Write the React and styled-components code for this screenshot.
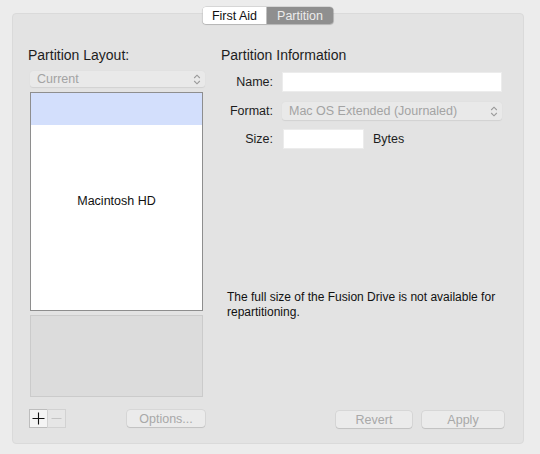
import styled, { createGlobalStyle } from 'styled-components';

const GlobalStyle = createGlobalStyle`
  html, body {
    margin: 0;
    padding: 0;
    background: #ececec;
    font-family: "Liberation Sans", Arial, sans-serif;
    color: #1a1a1a;
  }
`;

const Page = styled.div`
  width: 540px;
  height: 454px;
  padding: 13px 16px 10px 12px;
  box-sizing: border-box;
`;

const Panel = styled.div`
  position: relative;
  height: 100%;
  box-sizing: border-box;
  background: #e3e3e3;
  border: 1px solid #dadada;
  border-radius: 4px;
  padding: 33px 19px 15px 15px;
  display: flex;
  gap: 16px;
`;

const Tabs = styled.div`
  position: absolute;
  top: -7px;
  left: 50%;
  transform: translateX(-50%);
  display: flex;
  height: 17px;
  border-radius: 4px;
  box-shadow: 0 0 0 0.5px rgba(0, 0, 0, 0.18), 0 1px 1px rgba(0, 0, 0, 0.12);
  overflow: hidden;
`;

const Tab = styled.div`
  display: flex;
  align-items: center;
  justify-content: center;
  width: ${({ $w }) => $w}px;
  font-size: 12.5px;
  background: ${({ $active }) => ($active ? '#8f8f8f' : '#ffffff')};
  color: ${({ $active }) => ($active ? '#ececec' : '#111')};
`;

const LeftColumn = styled.div`
  width: 177px;
  flex-shrink: 0;
  display: flex;
  flex-direction: column;
`;

const RightColumn = styled.div`
  flex: 1;
  min-width: 0;
  display: flex;
  flex-direction: column;
`;

const Title = styled.div`
  font-size: 14px;
  line-height: 16px;
  color: #1d1d1d;
`;

const Popup = styled.div`
  display: flex;
  align-items: center;
  justify-content: space-between;
  height: ${({ $h }) => $h}px;
  margin-top: ${({ $mt }) => $mt}px;
  margin-left: ${({ $ml }) => $ml || 0}px;
  padding: 0 4px 0 7px;
  background: #e9e9e9;
  border-radius: 3px;
  box-shadow: 0 0.5px 1px rgba(0, 0, 0, 0.08);
  font-size: 12.5px;
  color: #a3a3a3;
`;

const Chevrons = () => (
  <svg width="8" height="11" viewBox="0 0 8 11" fill="none" stroke="#9a9a9a" strokeWidth="1.1">
    <path d="M1.2 4 L4 1.2 L6.8 4" />
    <path d="M1.2 7 L4 9.8 L6.8 7" />
  </svg>
);

const List = styled.div`
  margin: 5px 2px 0 2px;
  height: 219px;
  box-sizing: border-box;
  background: #ffffff;
  border: 1px solid #8e8e8e;
  display: flex;
  flex-direction: column;
`;

const SelectedSlice = styled.div`
  height: 32px;
  background: #d3dffc;
`;

const VolumeSlice = styled.div`
  flex: 1;
  display: flex;
  align-items: center;
  justify-content: center;
  font-size: 12.5px;
  color: #111;
  padding-bottom: 33px;
`;

const InfoBox = styled.div`
  margin: 4px 2px 0 2px;
  height: 82px;
  box-sizing: border-box;
  background: #dcdcdc;
  border: 1px solid #cbcbcb;
`;

const BottomBar = styled.div`
  margin-top: auto;
  display: flex;
  align-items: center;
  justify-content: space-between;
`;

const PlusMinus = styled.div`
  display: flex;
  margin-left: 1px;
`;

const SquareButton = styled.div`
  width: 19px;
  height: 19px;
  box-sizing: border-box;
  display: flex;
  align-items: center;
  justify-content: center;
  background: ${({ $disabled }) => ($disabled ? '#e6e6e6' : '#f4f4f4')};
  border: 1px solid ${({ $disabled }) => ($disabled ? '#d2d2d2' : '#bdbdbd')};
  margin-left: ${({ $first }) => ($first ? 0 : -1)}px;
`;

const PushButton = styled.div`
  width: ${({ $w }) => $w}px;
  height: 17px;
  display: flex;
  align-items: center;
  justify-content: center;
  background: #ebebeb;
  border-radius: 3px;
  box-shadow: 0 0 0 0.5px rgba(0, 0, 0, 0.1), 0 1px 1px rgba(0, 0, 0, 0.1);
  font-size: 12.5px;
  color: #a8a8a8;
`;

const ButtonGroup = styled.div`
  display: flex;
  gap: 10px;
  margin-left: auto;
`;

const Form = styled.div`
  display: grid;
  grid-template-columns: 52px 1fr;
  column-gap: 9px;
  align-items: center;
  margin: 9px 2px 0 0;
`;

const Label = styled.div`
  text-align: right;
  font-size: 12.5px;
  color: #1d1d1d;
`;

const Field = styled.div`
  height: 20px;
  width: ${({ $w }) => ($w ? `${$w}px` : 'auto')};
  box-sizing: border-box;
  background: #ffffff;
  border: 1px solid #ececec;
`;

const Row = styled.div`
  grid-column: 2;
  display: flex;
  align-items: center;
  gap: 9px;
  padding-left: 1px;
`;

const FormGap = styled.div`
  grid-column: 1 / 3;
  height: ${({ $h }) => $h}px;
`;

const Note = styled.div`
  margin-top: 141px;
  margin-left: 6px;
  font-size: 12px;
  line-height: 14.5px;
  color: #111;
  width: 276px;
`;

export default function App() {
  return (
    <>
      <GlobalStyle />
      <Page>
        <Panel>
          <Tabs>
            <Tab $w={64}>First Aid</Tab>
            <Tab $w={67} $active>Partition</Tab>
          </Tabs>

          <LeftColumn>
            <Title>Partition Layout:</Title>
            <Popup $h={16} $mt={8} $ml={2}>
              Current
              <Chevrons />
            </Popup>
            <List>
              <SelectedSlice />
              <VolumeSlice>Macintosh HD</VolumeSlice>
            </List>
            <InfoBox />
            <BottomBar>
              <PlusMinus>
                <SquareButton $first>
                  <svg width="13" height="13" viewBox="0 0 13 13" stroke="#111" strokeWidth="1.1">
                    <path d="M6.5 0.5 V12.5 M0.5 6.5 H12.5" />
                  </svg>
                </SquareButton>
                <SquareButton $disabled>
                  <svg width="11" height="11" viewBox="0 0 11 11" stroke="#c4c4c4" strokeWidth="1">
                    <path d="M0.5 5.5 H10.5" />
                  </svg>
                </SquareButton>
              </PlusMinus>
              <PushButton $w={78}>Options...</PushButton>
            </BottomBar>
          </LeftColumn>

          <RightColumn>
            <Title>Partition Information</Title>
            <Form>
              <Label>Name:</Label>
              <Field />
              <FormGap $h={10} />
              <Label>Format:</Label>
              <Popup $h={18} $mt={0}>
                Mac OS Extended (Journaled)
                <Chevrons />
              </Popup>
              <FormGap $h={9} />
              <Label>Size:</Label>
              <Row>
                <Field $w={81} />
                <Label>Bytes</Label>
              </Row>
            </Form>
            <Note>The full size of the Fusion Drive is not available for repartitioning.</Note>
            <BottomBar>
              <ButtonGroup>
                <PushButton $w={76}>Revert</PushButton>
                <PushButton $w={82}>Apply</PushButton>
              </ButtonGroup>
            </BottomBar>
          </RightColumn>
        </Panel>
      </Page>
    </>
  );
}
